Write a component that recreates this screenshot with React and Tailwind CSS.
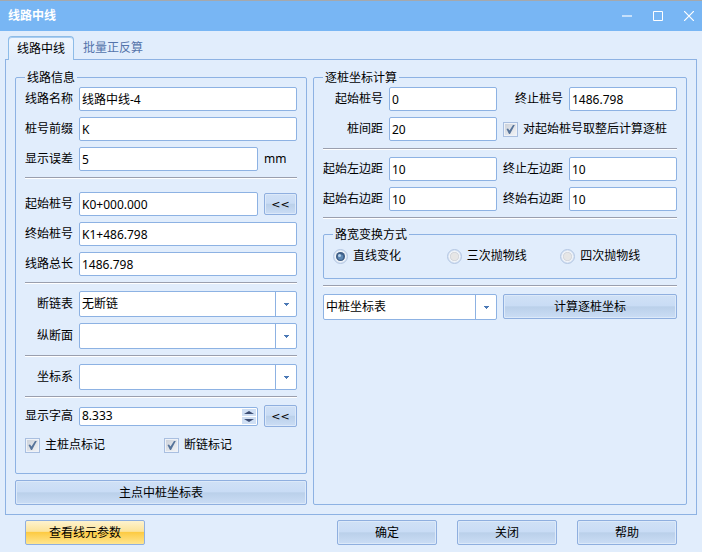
import React, { useState } from 'react'

const inputClass =
  'h-6 w-full min-w-0 rounded-xs border border-[#8db2e3] bg-white px-0.5 text-xs text-black outline-none'

const buttonClass =
  'rounded-xs border border-[#8fafdf] bg-[linear-gradient(#d0e1f6_0%,#c9dcf5_46%,#bad0ea_52%,#cbddf5_100%)] text-xs text-black shadow-[inset_0_0_0_1px_#dce9f9]'

function Separator() {
  return <hr className="h-0.5 border-t border-b border-t-[#9a9fae] border-b-white" />
}

function GroupBox({ title, className, children }) {
  return (
    <fieldset className={`min-w-0 rounded-xs border border-[#8db2e3] ${className}`}>
      <legend className="ml-[9px] h-[15px] px-0.5 leading-[15px]">{title}</legend>
      {children}
    </fieldset>
  )
}

function Field({ id, label, value, onChange, labelClass = 'w-12', children }) {
  return (
    <div className="flex min-w-0 items-center gap-1.5">
      <label htmlFor={id} className={`shrink-0 text-right whitespace-nowrap ${labelClass}`}>
        {label}
      </label>
      <input id={id} name={id} value={value} onChange={onChange} className={inputClass} />
      {children}
    </div>
  )
}

function ComboBox({ id, label, options }) {
  return (
    <div className="relative h-[26px] min-w-0 flex-1">
      <select
        id={id}
        aria-label={label}
        className="h-full w-full appearance-none rounded-xs border border-[#8db2e3] bg-white pr-6 pl-0.5 text-xs text-black outline-none"
      >
        {options.map((o) => (
          <option key={o}>{o}</option>
        ))}
      </select>
      <span className="pointer-events-none absolute inset-y-0 right-0 flex w-[22px] items-center justify-center border-l border-[#8db2e3]">
        <svg width="5" height="3" viewBox="0 0 5 3" fill="#4a78b5" shapeRendering="crispEdges">
          <path d="M0 0h5v1H0zM1 1h3v1H1zM2 2h1v1H2z" />
        </svg>
      </span>
    </div>
  )
}

function CheckBox({ id, label, checked, onChange }) {
  return (
    <label htmlFor={id} className="flex items-center gap-[5px] whitespace-nowrap">
      <span className="relative flex h-[15px] w-[15px] shrink-0">
        <input
          type="checkbox"
          id={id}
          name={id}
          checked={checked}
          onChange={onChange}
          className="h-full w-full appearance-none border border-[#a9bfe0] bg-[linear-gradient(135deg,#c9cfd8,#f4f5f7)] shadow-[inset_0_0_0_1px_#eef2f8]"
        />
        {checked && (
          <svg className="pointer-events-none absolute inset-0" width="15" height="15" viewBox="0 0 15 15">
            <path d="M3.5 7 5 6.5 6.5 8.5 10 3h1.8L7 12H6z" fill="#567399" />
          </svg>
        )}
      </span>
      {label}
    </label>
  )
}

function Radio({ label, checked, onChange }) {
  return (
    <label className="flex items-center gap-[5px] whitespace-nowrap">
      <span className="relative flex h-[15px] w-[15px] shrink-0">
        <input
          type="radio"
          name="curve"
          checked={checked}
          onChange={onChange}
          className="h-full w-full appearance-none rounded-full border border-[#b4c7e3] bg-[radial-gradient(circle,#e6e6e6_35%,#d3d6dc_46%,#f2f5f9_54%,#d6e2f3_70%)]"
        />
        {checked && (
          <svg className="pointer-events-none absolute inset-0" width="15" height="15" viewBox="0 0 15 15">
            <circle cx="7.5" cy="7.5" r="4.5" fill="#3f5f88" />
            <circle cx="7.5" cy="8" r="2.8" fill="#5d87b3" />
            <circle cx="6.5" cy="6.5" r="1.5" fill="#b9d4ec" />
          </svg>
        )}
      </span>
      {label}
    </label>
  )
}

export default function App() {
  const [form, setForm] = useState({
    name: '线路中线-4',
    prefix: 'K',
    error: '5',
    start: 'K0+000.000',
    end: 'K1+486.798',
    length: '1486.798',
    textHeight: '8.333',
    calcStart: '0',
    calcEnd: '1486.798',
    step: '20',
    startLeft: '10',
    endLeft: '10',
    startRight: '10',
    endRight: '10',
    round: true,
    mainMark: true,
    breakMark: true,
    curve: '直线变化'
  })

  const handleChange = (e) => {
    const { name, type, checked, value } = e.target
    setForm({ ...form, [name]: type === 'checkbox' ? checked : value })
  }

  const stepHeight = (delta) => {
    setForm({ ...form, textHeight: (parseFloat(form.textHeight) + delta).toFixed(3) })
  }

  return (
    <div className="flex min-h-screen flex-col bg-[#e1edfc] font-['Noto_Sans','Noto_Sans_CJK_SC',sans-serif] text-xs text-black">
      <header className="flex h-[31px] items-center justify-between border-t border-[#a5a8ac] bg-[#78b6f4] pr-2 pl-2 text-white">
        <h1 className="font-bold">线路中线</h1>
        <div className="flex gap-[21px]">
          <button type="button" aria-label="最小化">
            <svg width="10" height="10" viewBox="0 0 10 10" stroke="#c5e0fb" strokeWidth="2">
              <path d="M0 5h10" />
            </svg>
          </button>
          <button type="button" aria-label="最大化">
            <svg width="10" height="10" viewBox="0 0 10 10" fill="none" stroke="#fff">
              <path d="M.5.5h9v9h-9z" />
            </svg>
          </button>
          <button type="button" aria-label="关闭窗口">
            <svg width="10" height="10" viewBox="0 0 10 10" stroke="#fff" strokeWidth="1.2">
              <path d="M0 0l10 10M10 0L0 10" />
            </svg>
          </button>
        </div>
      </header>

      <nav className="relative z-10 -mb-px flex gap-[9px] px-2 pt-[5px]" role="tablist">
        <button
          type="button"
          role="tab"
          aria-selected="true"
          className="h-6 rounded-t border border-b-0 border-[#8dbce8] bg-linear-to-b from-[#f0f6fe] to-[#e1edfc] px-2 shadow-[inset_0_1px_0_#a9cdf0]"
        >
          线路中线
        </button>
        <button type="button" role="tab" aria-selected="false" className="h-6 text-[#5474ab]">
          批量正反算
        </button>
      </nav>

      <main className="mx-[5px] flex flex-1 gap-1.5 border border-[#8db2e3] p-[9px] pt-2.5">
        <div className="flex min-w-0 flex-[292] flex-col gap-1.5">
          <GroupBox title="线路信息" className="flex-1">
            <div className="flex flex-col gap-1.5 px-[9px] pt-0.5 pb-5">
              <Field id="name" label="线路名称" value={form.name} onChange={handleChange} />
              <Field id="prefix" label="桩号前缀" value={form.prefix} onChange={handleChange} />
              <Field id="error" label="显示误差" value={form.error} onChange={handleChange}>
                <span className="w-[33px] shrink-0">mm</span>
              </Field>
              <Separator />
              <div className="flex flex-col gap-1.5 pt-[7px]">
                <Field id="start" label="起始桩号" value={form.start} onChange={handleChange}>
                  <button type="button" className={`h-[22px] w-[33px] shrink-0 ${buttonClass}`}>
                    <span className="font-['DejaVu_Sans',sans-serif] text-[11px]">&lt;&lt;</span>
                  </button>
                </Field>
                <Field id="end" label="终始桩号" value={form.end} onChange={handleChange} />
                <Field id="length" label="线路总长" value={form.length} onChange={handleChange} />
              </div>
              <Separator />
              <div className="flex flex-col gap-1.5 pt-px">
                <div className="flex items-center gap-1.5">
                  <label htmlFor="chain" className="w-12 shrink-0 text-right">断链表</label>
                  <ComboBox id="chain" label="断链表" options={['无断链']} />
                </div>
                <div className="flex items-center gap-1.5">
                  <label htmlFor="profile" className="w-12 shrink-0 text-right">纵断面</label>
                  <ComboBox id="profile" label="纵断面" options={['']} />
                </div>
              </div>
              <Separator />
              <div className="flex items-center gap-1.5 pt-px">
                <label htmlFor="crs" className="w-12 shrink-0 text-right">坐标系</label>
                <ComboBox id="crs" label="坐标系" options={['']} />
              </div>
              <Separator />
              <div className="flex items-center gap-1.5 pt-px">
                <label htmlFor="textHeight" className="w-12 shrink-0">显示字高</label>
                <div className="flex h-[19px] min-w-0 flex-1 rounded-xs border border-[#8db2e3] bg-white p-px">
                  <input
                    id="textHeight"
                    name="textHeight"
                    value={form.textHeight}
                    onChange={handleChange}
                    className="w-full min-w-0 pl-px text-xs outline-none"
                  />
                  <div className="flex w-3.5 shrink-0 flex-col gap-px">
                    <button
                      type="button"
                      aria-label="增大"
                      onClick={() => stepHeight(1)}
                      className="flex flex-1 items-center justify-center bg-[#cfdff4]"
                    >
                      <svg width="10" height="3" viewBox="0 0 10 3" fill="#3c4d73">
                        <path d="M0 3 5 0l5 3z" />
                      </svg>
                    </button>
                    <button
                      type="button"
                      aria-label="减小"
                      onClick={() => stepHeight(-1)}
                      className="flex flex-1 items-center justify-center bg-[#cfdff4]"
                    >
                      <svg width="10" height="3" viewBox="0 0 10 3" fill="#3c4d73">
                        <path d="M0 0 5 3l5-3z" />
                      </svg>
                    </button>
                  </div>
                </div>
                <button type="button" className={`h-[22px] w-[33px] shrink-0 ${buttonClass}`}>
                  <span className="font-['DejaVu_Sans',sans-serif] text-[11px]">&lt;&lt;</span>
                </button>
              </div>
              <div className="grid grid-cols-2 gap-1.5 pt-1">
                <CheckBox id="mainMark" label="主桩点标记" checked={form.mainMark} onChange={handleChange} />
                <CheckBox id="breakMark" label="断链标记" checked={form.breakMark} onChange={handleChange} />
              </div>
            </div>
          </GroupBox>
          <button type="button" className={`h-[25px] ${buttonClass}`}>主点中桩坐标表</button>
        </div>

        <GroupBox title="逐桩坐标计算" className="flex-[372]">
          <div className="flex flex-col gap-1.5 px-[9px] pt-0.5 pb-2">
            <div className="grid grid-cols-2 gap-1.5 pb-px">
              <Field id="calcStart" label="起始桩号" labelClass="w-15" value={form.calcStart} onChange={handleChange} />
              <Field id="calcEnd" label="终止桩号" labelClass="w-15" value={form.calcEnd} onChange={handleChange} />
              <Field id="step" label="桩间距" labelClass="w-15" value={form.step} onChange={handleChange} />
              <CheckBox id="round" label="对起始桩号取整后计算逐桩" checked={form.round} onChange={handleChange} />
            </div>
            <Separator />
            <div className="grid grid-cols-2 gap-1.5 pt-px">
              <Field id="startLeft" label="起始左边距" labelClass="w-15" value={form.startLeft} onChange={handleChange} />
              <Field id="endLeft" label="终止左边距" labelClass="w-15" value={form.endLeft} onChange={handleChange} />
              <Field id="startRight" label="起始右边距" labelClass="w-15" value={form.startRight} onChange={handleChange} />
              <Field id="endRight" label="终始右边距" labelClass="w-15" value={form.endRight} onChange={handleChange} />
            </div>
            <Separator />
            <GroupBox title="路宽变换方式" className="mt-0.5 h-[52px]">
              <div className="grid grid-cols-3 pt-1.5 pr-0.5 pl-[9px]">
                {['直线变化', '三次抛物线', '四次抛物线'].map((c) => (
                  <Radio key={c} label={c} checked={form.curve === c} onChange={() => setForm({ ...form, curve: c })} />
                ))}
              </div>
            </GroupBox>
            <Separator />
            <div className="grid grid-cols-2 gap-1.5 pt-px">
              <ComboBox id="table" label="坐标表" options={['中桩坐标表']} />
              <button type="button" className={`h-[25px] ${buttonClass}`}>计算逐桩坐标</button>
            </div>
          </div>
        </GroupBox>
      </main>

      <footer className="flex items-center justify-between px-[25px] pt-[5px] pb-[7px]">
        <button
          type="button"
          className="h-[25px] w-30 rounded-xs border border-[#8fafdf] bg-[linear-gradient(#fdf3cf_0%,#fce39a_45%,#fdcb43_50%,#ffe58f_100%)]"
        >
          查看线元参数
        </button>
        <div className="flex gap-5">
          <button type="button" className={`h-[25px] w-25 ${buttonClass}`}>确定</button>
          <button type="button" className={`h-[25px] w-25 ${buttonClass}`}>关闭</button>
          <button type="button" className={`h-[25px] w-25 ${buttonClass}`}>帮助</button>
        </div>
      </footer>
    </div>
  )
}
